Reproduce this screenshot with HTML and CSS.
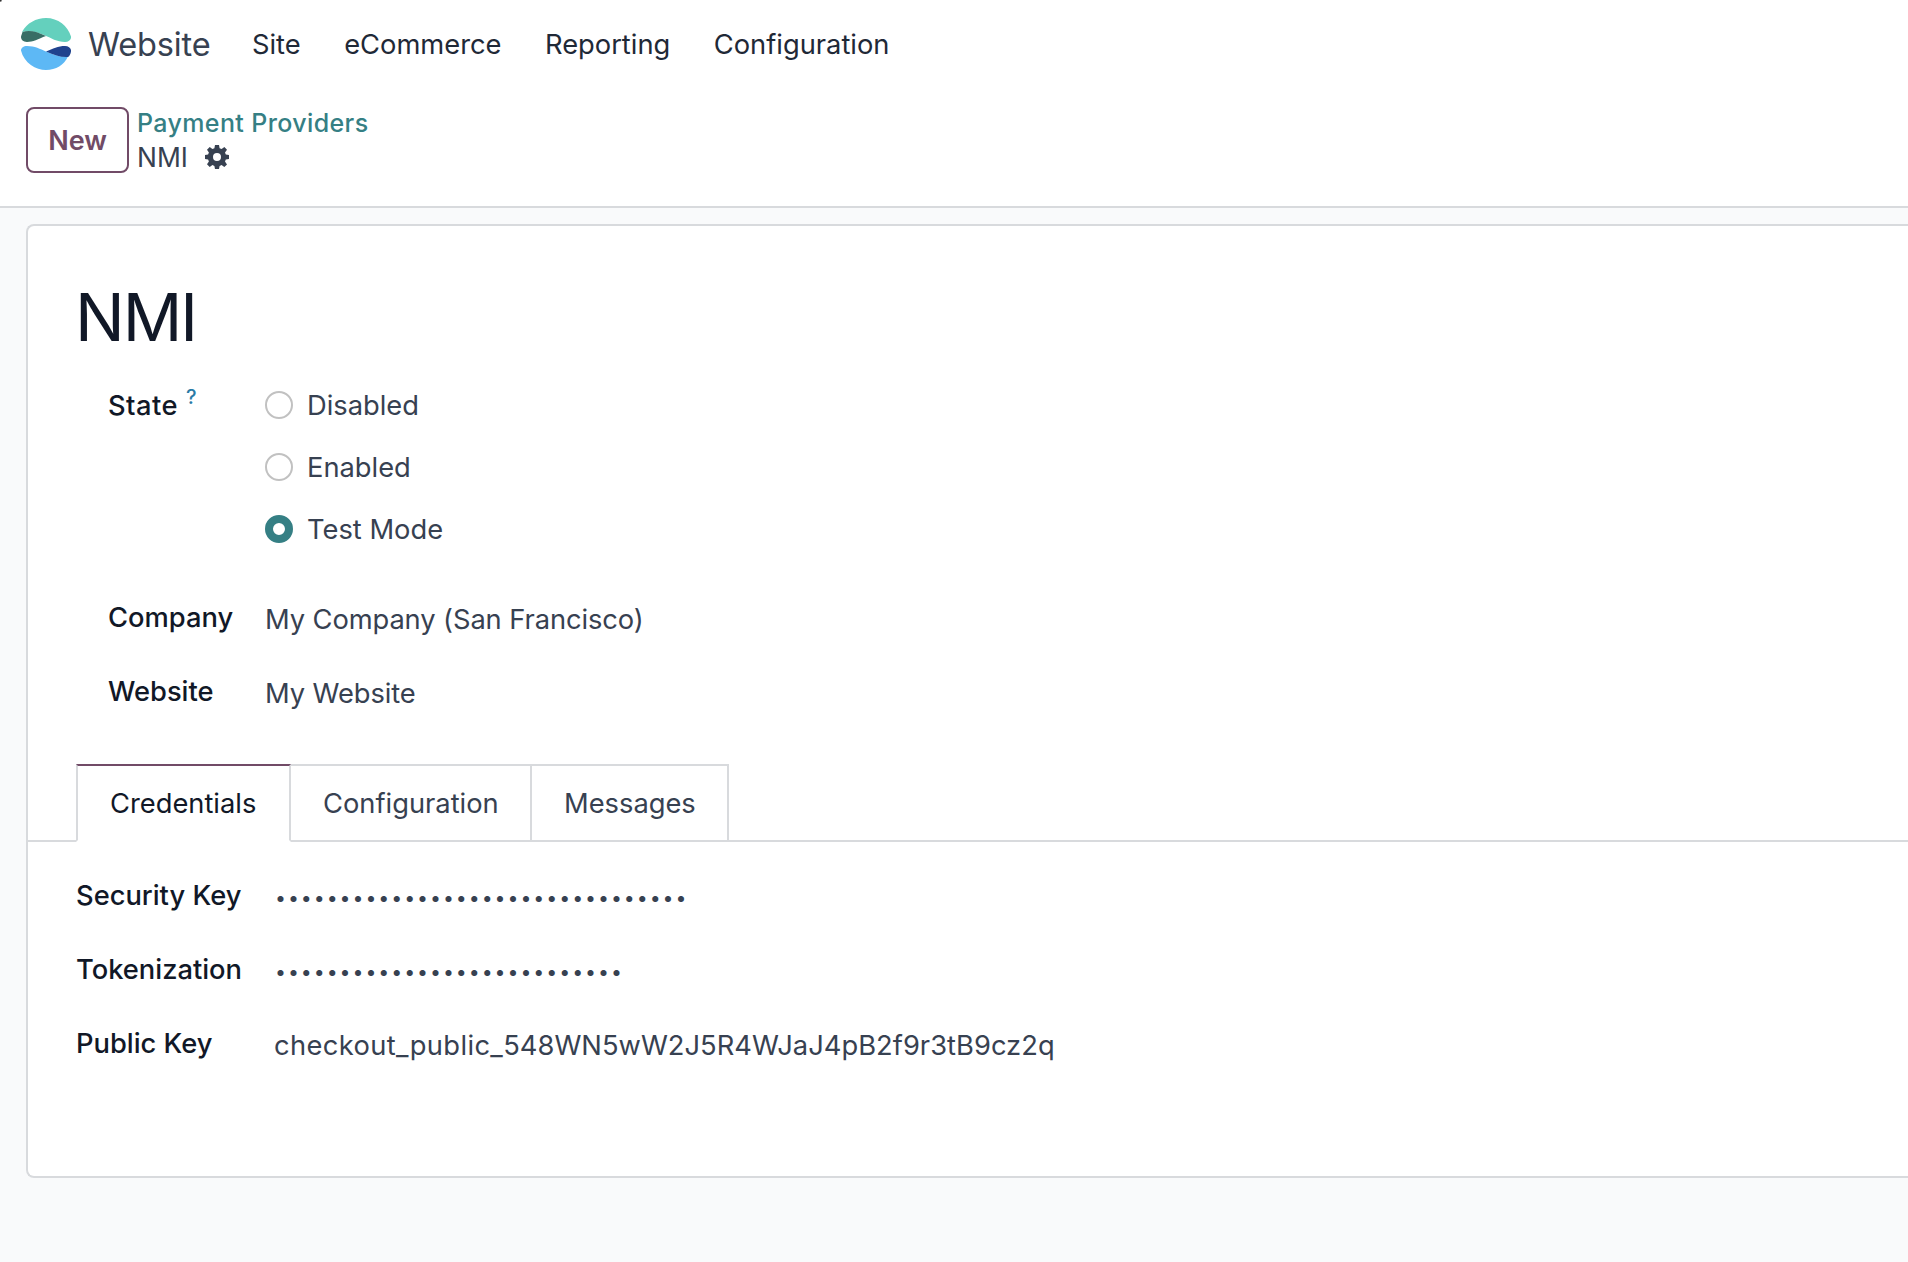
FILE: index.html
```html
<!DOCTYPE html>
<html lang="en">
<head>
<meta charset="utf-8">
<title>NMI - Payment Providers</title>
<link rel="stylesheet" href="styles.css">
</head>
<body>
<header class="navbar">
  <svg class="logo" viewBox="0 0 50 52" aria-hidden="true">
    <path fill="#64d0bd" d="M1 14C6 5 15 0 25 0c12 0 22 8 25 18.500c.5 3-2 5.500-6 5.500c-8 0-14-4-21-7S8 12 1 14z"/>
    <path fill="#386e66" d="M1.500 14C8 11.500 16 13.500 25 18C17 21 12 24 6 24C1 24-1 20 .5 17z"/>
    <path fill="#5db8f5" d="M0 32.500C0 30 2.500 28 6 28c8 0 13 3 19 5.500s13 6 22 5C43 47 35 52 25 52S3 45 0 32.500z"/>
    <path fill="#20438e" d="M25 33.500C32 30.500 37 28 44 28c4 0 6.500 2.500 6 5.500c-.3 2-1.500 5-3 5.500C40 39.500 33 37 25 33.500z"/>
  </svg>
  <span class="brand">Website</span>
  <nav class="menu">
    <a>Site</a>
    <a>eCommerce</a>
    <a>Reporting</a>
    <a>Configuration</a>
  </nav>
</header>
<div class="control-panel">
  <button class="btn-new">New</button>
  <div class="breadcrumb">
    <a class="crumb-link">Payment Providers</a>
    <div class="crumb-current">
      <span class="crumb-name">NMI</span>
      <svg class="gear" viewBox="0 0 24 24" aria-hidden="true">
        <path fill="#374151" fill-rule="evenodd" d="M10 0h4l.6 3.200 2 .9L19.400 2.100 22 4.700 20 7.500l.8 2 3.200.5v4l-3.200.6-.8 2 2 2.800-2.700 2.600-2.700-1.900-2 .8L14 24h-4l-.6-3.100-2-.8-2.700 1.900L2 19.300l1.900-2.700-.8-2L0 14v-4l3.100-.5.8-2L2 4.700 4.700 2.100l2.700 2 2-.9zM12 8a4 4 0 1 0 0 8a4 4 0 1 0 0-8z"/>
      </svg>
    </div>
  </div>
</div>
<main class="content">
  <section class="sheet">
    <h1 class="title">NMI</h1>
    <div class="group">
      <div class="label"><span class="state">State</span><sup class="help">?</sup></div>
      <div class="radios">
        <label class="radio"><i class="dot"></i><span>Disabled</span></label>
        <label class="radio"><i class="dot"></i><span>Enabled</span></label>
        <label class="radio"><i class="dot checked"></i><span>Test Mode</span></label>
      </div>
      <div class="label">Company</div>
      <div class="value">My Company (San Francisco)</div>
      <div class="label">Website</div>
      <div class="value">My Website</div>
    </div>
    <div class="tabs">
      <a class="tab t1 active">Credentials</a>
      <a class="tab t2">Configuration</a>
      <a class="tab t3">Messages</a>
    </div>
    <div class="credentials">
      <div class="label">Security Key</div>
      <div class="value"><span class="masked">••••••••••••••••••••••••••••••••</span></div>
      <div class="label">Tokenization</div>
      <div class="value"><span class="masked">•••••••••••••••••••••••••••</span></div>
      <div class="label">Public Key</div>
      <div class="value key"><span class="prefix">checkout_public_</span>548WN5wW2J5R4WJaJ4pB2f9r3tB9cz2q</div>
    </div>
  </section>
</main>
</body>
</html>
```
FILE: styles.css
```css
* { box-sizing: border-box; }
body {
  margin: 0;
  height: 1262px;
  overflow: hidden;
  background: #f9fafb;
  color: #374151;
  font-family: Inter, "Liberation Sans", sans-serif;
  font-size: 27.3px;
  line-height: 42px;
  white-space: nowrap;
}
.navbar {
  display: flex;
  align-items: center;
  height: 88px;
  padding-left: 21px;
  background: radial-gradient(circle at 0 0, #333 1px, #fff 2.5px);
}
.logo { width: 50px; height: 52px; }
.brand {
  width: 164px;
  margin-left: 17px;
  padding-top: 2px;
  font-size: 32.5px;
  letter-spacing: -.15px;
}
.menu { display: flex; gap: 43.5px; padding-top: 2px; color: #1f2937; }
.control-panel {
  display: flex;
  gap: 8px;
  height: 120px;
  padding: 18px 0 0 26px;
  background: #fff;
  border-bottom: 2px solid #d8dadd;
}
.btn-new {
  width: 103px;
  height: 66px;
  margin-top: 1px;
  padding: 2px 0 0;
  border: 2px solid #714b67;
  border-radius: 8px;
  background: #fff;
  color: #714b67;
  font: 600 27px/40px Inter, "Liberation Sans", sans-serif;
}
.breadcrumb { line-height: 34px; }
.crumb-link {
  display: block;
  color: #357f84;
  font-size: 25px;
  font-weight: 500;
  letter-spacing: .38px;
}
.crumb-current { display: flex; align-items: center; font-size: 26.4px; }
.crumb-name { width: 67.5px; }
.gear { width: 24px; height: 24px; }
.content { padding: 16px 0 0 26px; }
.sheet {
  height: 954px;
  padding-top: 51px;
  border: 2px solid #d8dadd;
  border-right: 0;
  border-radius: 8px 0 0 8px;
  background: #fff;
}
.title {
  margin: 0 0 28px 47px;
  color: #111827;
  font-size: 66px;
  font-weight: 400;
  line-height: 80px;
  letter-spacing: -2px;
}
.group {
  display: grid;
  grid-template-columns: 157px auto;
  grid-template-rows: 212px 74px 93px;
  padding-left: 80px;
}
.label { color: #111827; font-weight: 500; }
.state { letter-spacing: .45px; }
.help { margin-left: 8px; color: #2a7ba6; font-size: 20px; line-height: 0; vertical-align: 11px; }
.value { padding-top: 2px; letter-spacing: -.09px; }
.radio { display: flex; align-items: center; height: 40px; margin-bottom: 22px; }
.radio span { padding-top: 2px; }
.dot {
  width: 28px;
  height: 28px;
  margin-right: 14px;
  border: 2px solid #c1c1c1;
  border-radius: 50%;
}
.dot.checked { border: 8px solid #357f84; }
.tabs {
  display: flex;
  height: 78px;
  padding-left: 48px;
  box-shadow: inset 0 -2px #d8dadd;
}
.tab {
  padding: 17px 0 0 32px;
  border: 2px solid #d8dadd;
  border-left: 0;
}
.t1 { width: 215px; }
.t2 { width: 241px; }
.t3 { width: 197px; }
.tab.active {
  border-left: 2px solid #d8dadd;
  border-top-color: #714b67;
  border-bottom-color: #fff;
  color: #111827;
}
.credentials {
  display: grid;
  grid-template-columns: 198px auto;
  grid-auto-rows: 74px;
  padding: 33px 0 0 48px;
}
.masked {
  margin-left: 1px;
  font-size: 19.5px;
  letter-spacing: 1.95px;
  vertical-align: 2px;
  line-height: 1;
}
.key { letter-spacing: .03px; }
.prefix { letter-spacing: .37px; }
```
